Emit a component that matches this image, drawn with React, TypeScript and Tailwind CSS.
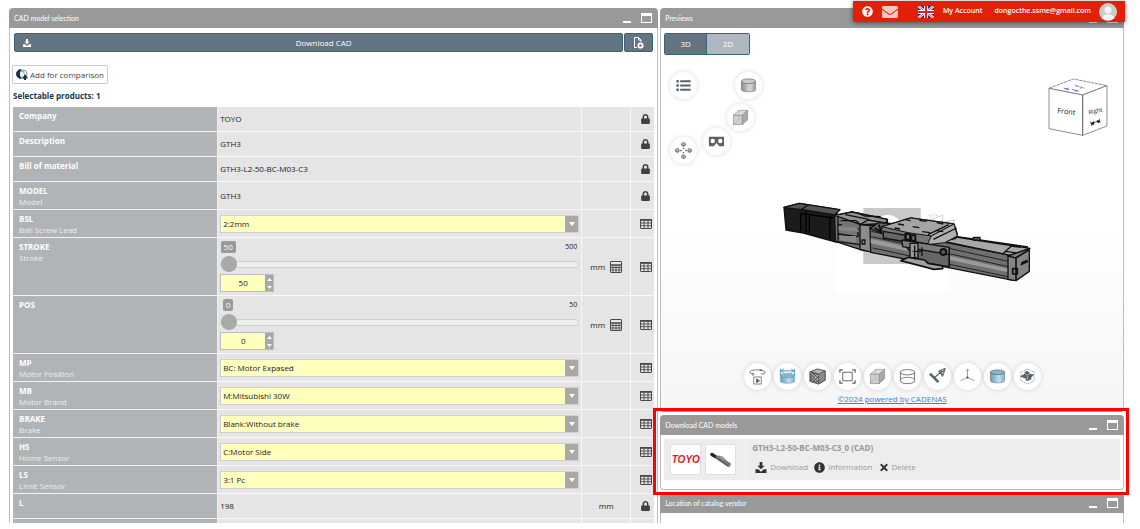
import React, { useState } from "react";
import { FaEnvelope, FaInfoCircle, FaLock, FaQuestionCircle, FaTimes } from "react-icons/fa";

type Row = {
  name: string;
  sub?: string;
  kind: "text" | "select" | "slider";
  value: string;
  max?: number;
  unit?: string;
};

const rows: Row[] = [
  { name: "Company", kind: "text", value: "TOYO" },
  { name: "Description", kind: "text", value: "GTH3" },
  { name: "Bill of material", kind: "text", value: "GTH3-L2-50-BC-M03-C3" },
  { name: "MODEL", sub: "Model", kind: "text", value: "GTH3" },
  { name: "BSL", sub: "Ball Screw Lead", kind: "select", value: "2:2mm" },
  { name: "STROKE", sub: "Stroke", kind: "slider", value: "50", max: 500, unit: "mm" },
  { name: "POS", kind: "slider", value: "0", max: 50, unit: "mm" },
  { name: "MP", sub: "Motor Position", kind: "select", value: "BC: Motor Expased" },
  { name: "MB", sub: "Motor Brand", kind: "select", value: "M:Mitsubishi 30W" },
  { name: "BRAKE", sub: "Brake", kind: "select", value: "Blank:Without brake" },
  { name: "HS", sub: "Home Sensor", kind: "select", value: "C:Motor Side" },
  { name: "LS", sub: "Limit Sensor", kind: "select", value: "3:1 Pc" },
  { name: "L", kind: "text", value: "198", unit: "mm" },
  { name: "", kind: "text", value: "" },
];

function DownloadIcon({ className }: { className?: string }) {
  return (
    <svg viewBox="0 0 12 12" className={className} fill="currentColor" aria-hidden="true">
      <path d="M4.5 0h3v4H10L6 8 2 4h2.500zM0 8h3l3 2.500L9 8h3v4H0z" />
    </svg>
  );
}

function TableIcon() {
  return (
    <svg viewBox="0 0 12 10" className="h-[10px] w-3" fill="none" stroke="#484848" aria-hidden="true">
      <rect x="0.5" y="0.5" width="11" height="9" rx="0.5" />
      <path d="M0 1h12" strokeWidth="1.600" />
      <path d="M0 4h12M0 6.700h12M4 1v8M8 1v8" strokeWidth="0.900" />
    </svg>
  );
}

function CalculatorIcon() {
  return (
    <svg viewBox="0 0 12 12" className="h-3 w-3" fill="none" stroke="#484848" aria-hidden="true">
      <rect x="0.500" y="0.500" width="11" height="11" rx="0.500" />
      <path d="M0 4h12" strokeWidth="1.500" />
      <path d="M0 6.500h12M0 9h12M3 4v8M6 4v8M9 4v8" strokeWidth="0.900" />
    </svg>
  );
}

function PanelHeader({ title }: { title: string }) {
  return (
    <header className="flex h-5 shrink-0 items-center rounded-t bg-[#999999] pl-[5px] pr-[6px] text-white">
      <h2 className="flex-1 font-['Lato','Open_Sans',sans-serif] text-[7px] leading-[10px]">{title}</h2>
      <button type="button" aria-label={`Minimize ${title}`} className="mr-[10px] flex h-[10px] w-2 items-end">
        <span className="h-[2px] w-2 bg-white" />
      </button>
      <button type="button" aria-label={`Maximize ${title}`} className="h-[10px] w-[11px] border border-t-[3px] border-white" />
    </header>
  );
}

function SelectField({ row }: { row: Row }) {
  const [value, setValue] = useState(row.value);
  return (
    <div className="flex h-[18px] border border-[#d0d0d0]">
      <select
        aria-label={row.name}
        value={value}
        onChange={(e) => setValue(e.target.value)}
        className="min-w-0 flex-1 appearance-none bg-[#ffffbe] pl-[2px] text-[8px] leading-4 text-[#222] outline-none"
      >
        <option value={row.value}>{row.value}</option>
      </select>
      <span className="flex w-[13px] items-center justify-center bg-[#a8a8a8]">
        <svg viewBox="0 0 6 4" className="h-1 w-[6px]" fill="#fff" aria-hidden="true">
          <path d="M0 0h6L3 4z" />
        </svg>
      </span>
    </div>
  );
}

function SliderField({ row }: { row: Row }) {
  const [value, setValue] = useState(Number(row.value));
  const max = row.max ?? 100;
  const min = Number(row.value);
  const change = (next: number) => setValue(Math.min(max, Math.max(min, next)));

  return (
    <div className="flex flex-col items-start">
      <div className="flex h-3 w-full items-center justify-between pr-[2px]">
        <span className="flex w-4 justify-center">
          <span className="rounded-xs bg-[#999] px-[3px] text-[8px] leading-3 text-white">{value}</span>
        </span>
        <span className="text-[7px] leading-3">{max}</span>
      </div>
      <input
        type="range"
        aria-label={`${row.name} slider`}
        min={min}
        max={max}
        value={value}
        onChange={(e) => change(Number(e.target.value))}
        className="mt-[3px] block h-4 w-full appearance-none bg-transparent [&::-webkit-slider-runnable-track]:h-[7px] [&::-webkit-slider-runnable-track]:rounded-full [&::-webkit-slider-runnable-track]:border [&::-webkit-slider-runnable-track]:border-[#d0d0d0] [&::-webkit-slider-runnable-track]:bg-[#eeeeee] [&::-webkit-slider-thumb]:-mt-[6px] [&::-webkit-slider-thumb]:h-4 [&::-webkit-slider-thumb]:w-4 [&::-webkit-slider-thumb]:appearance-none [&::-webkit-slider-thumb]:rounded-full [&::-webkit-slider-thumb]:bg-[#a9a9a9]"
      />
      <div className="mt-[2px] flex h-[18px] w-[54px] border border-[#bdbdbd]">
        <input
          type="text"
          aria-label={row.name}
          value={value}
          onChange={(e) => change(Number(e.target.value) || min)}
          className="w-[44px] min-w-0 bg-[#ffffbe] text-center text-[8px] leading-4 outline-none"
        />
        <div className="flex flex-1 flex-col bg-[#a8a8a8]">
          <button type="button" aria-label={`Increase ${row.name}`} onClick={() => change(value + 1)} className="flex flex-1 items-center justify-center">
            <svg viewBox="0 0 5 3" className="h-[3px] w-[5px]" fill="#fff" aria-hidden="true"><path d="M0 3h5L2.500 0z" /></svg>
          </button>
          <button type="button" aria-label={`Decrease ${row.name}`} onClick={() => change(value - 1)} className="flex flex-1 items-center justify-center">
            <svg viewBox="0 0 5 3" className="h-[3px] w-[5px]" fill="#fff" aria-hidden="true"><path d="M0 0h5L2.500 3z" /></svg>
          </button>
        </div>
      </div>
    </div>
  );
}

const rowHeight = (row: Row) => {
  if (row.kind === "slider") return "h-[58px]";
  return row.sub ? "h-7" : "h-[25px]";
};

function SelectionPanel() {
  return (
    <section className="flex min-w-0 flex-col">
      <PanelHeader title="CAD model selection" />
      <div className="flex-1 overflow-hidden border-x border-[#bdbdbd] px-[3px] pt-[5px]">
        <div className="flex gap-px px-px text-[8px] text-white">
          <button type="button" className="grid h-[19px] flex-1 grid-cols-[10px_1fr] items-center rounded-xs border border-[#3a6378] bg-[#627580] px-2">
            <DownloadIcon className="h-2 w-2" />
            <span>Download CAD</span>
          </button>
          <button type="button" aria-label="Export options" className="flex h-[19px] w-[29px] items-center justify-center rounded-xs border border-[#3a6378] bg-[#627580]">
            <svg viewBox="0 0 11 12" className="h-3 w-[11px]" fill="none" stroke="#fff" aria-hidden="true">
              <path d="M4 10.500H1.500v-10h4L8 3v2M5.500.500V3H8" />
              <circle cx="7.500" cy="8.500" r="2.200" strokeWidth="1.800" />
            </svg>
          </button>
        </div>
        <button type="button" className="-ml-px mt-[13px] flex h-[19px] items-center gap-[2px] rounded-xs border border-[#c4ccd0] px-[3px] text-[8px] text-[#444]">
          <svg viewBox="0 0 12 11" className="h-[11px] w-3" aria-hidden="true">
            <circle cx="7" cy="5" r="4" fill="#fff" stroke="#8295a5" />
            <path d="M5 .5a4.500 4.500 0 1 0 0 9C3 7 3 3 5 .5z" fill="#16344c" stroke="#16344c" />
            <path d="m5 3 2-1 2 4" stroke="#8295a5" fill="none" />
            <path d="M9 6v5M6.500 8.500h5" stroke="#16344c" strokeWidth="2" />
          </svg>
          Add for comparison
        </button>
        <p className="text-[8px] font-bold leading-[23px] text-[#203848]">Selectable products: 1</p>

        <table className="w-full table-fixed border-separate border-spacing-0 text-[8px] text-[#222]">
          <colgroup>
            <col className="w-[32%]" />
            <col />
            <col className="w-[49px]" />
            <col className="w-[23px]" />
          </colgroup>
          <tbody>
            {rows.map((row) => (
              <tr key={row.name} className={rowHeight(row)}>
                <th scope="row" className="border-b border-r border-[#f1f1f1] bg-[#b0b4b7] p-0 pl-[6px] pt-[3px] text-left align-top leading-[11px] text-white">
                  {row.name}
                  {row.sub && <span className="block font-normal text-[#eceeef]">{row.sub}</span>}
                </th>
                <td className="border-b border-r border-[#f8f8f8] bg-[#e5e5e5] px-[2px] py-0">
                  {row.kind === "text" && row.value}
                  {row.kind === "select" && <SelectField row={row} />}
                  {row.kind === "slider" && <SliderField row={row} />}
                </td>
                <td className="border-b border-r border-[#f8f8f8] bg-[#e5e5e5] p-0">
                  <div className="flex items-center justify-center gap-[5px]">
                    {row.unit}
                    {row.kind === "slider" && <CalculatorIcon />}
                  </div>
                </td>
                <td className="border-b border-[#f8f8f8] bg-[#e5e5e5] p-0 pl-[6px]">
                  <div className="flex justify-center">
                    {row.kind === "text" ? row.name && <FaLock className="h-[10px] w-[9px] text-[#404040]" /> : <TableIcon />}
                  </div>
                </td>
              </tr>
            ))}
          </tbody>
        </table>
      </div>
    </section>
  );
}

function RoundButton({ label, className = "", children }: { label: string; className?: string; children: React.ReactNode }) {
  return (
    <button type="button" aria-label={label} className={`flex h-[27px] w-[27px] items-center justify-center rounded-full bg-white shadow-[0_0_5px_rgba(0,0,0,0.15)] ${className}`}>
      <svg viewBox="0 0 18 18" className="h-[17px] w-[17px]" fill="none" stroke="#596169" aria-hidden="true">
        {children}
      </svg>
    </button>
  );
}

function Cylinder({ fill }: { fill: string }) {
  return (
    <>
      <defs>
        <linearGradient id={`cyl-${fill}`}>
          <stop offset="0" stopColor={fill === "blue" ? "#5f9cbb" : "#8c8c8c"} />
          <stop offset="0.600" stopColor={fill === "blue" ? "#c6e0ec" : "#d8d8d8"} />
          <stop offset="1" stopColor={fill === "blue" ? "#7eb0c8" : "#9a9a9a"} />
        </linearGradient>
      </defs>
      <path d="M1.500 4.500v9c0 3 15 3 15 0v-9" fill={`url(#cyl-${fill})`} strokeWidth="0.500" />
      <ellipse cx="9" cy="4.500" rx="7.500" ry="2.500" fill={fill === "blue" ? "#82b6ce" : "#cccccc"} strokeWidth="0.700" />
    </>
  );
}

function Cube() {
  return (
    <>
      <path d="M1.500 6.500H11v10H1.500z" fill="#cfcfcf" stroke="#888" strokeWidth="0.700" />
      <path d="M1.500 6.500 7 1.500h9.500l-5.500 5z" fill="#dedede" stroke="#888" strokeWidth="0.700" />
      <path d="m11 6.500 5.500-5v10l-5.500 5z" fill="#a9a9a9" stroke="#888" strokeWidth="0.700" />
      <path d="M7 1.500v10h9.500M7 11.500l-5.500 5" stroke="#aaa" strokeWidth="0.500" />
    </>
  );
}

function OrbitMenu() {
  return (
    <div className="absolute left-[9px] top-[44px]">
      <RoundButton label="Structure" className="absolute left-0 top-0">
        <path d="M5.500 4.500h11M5.500 9h11M5.500 13.500h11" strokeWidth="2" />
        <path d="M1.500 4.500h2.500M1.500 9h2.500M1.500 13.500h2.500" strokeWidth="2.600" />
      </RoundButton>
      <RoundButton label="Shading" className="absolute left-[65px] top-0">
        <Cylinder fill="grey" />
      </RoundButton>
      <RoundButton label="Projection" className="absolute left-[57px] top-[32px]">
        <Cube />
      </RoundButton>
      <RoundButton label="VR view" className="absolute left-[33px] top-[56px]">
        <path d="M1 4h16v10h-5L9 10.500 6 14H1z" fill="#596169" stroke="none" />
        <circle cx="5" cy="8.500" r="2.300" fill="#fff" stroke="none" />
        <circle cx="13" cy="8.500" r="2.300" fill="#fff" stroke="none" />
      </RoundButton>
      <RoundButton label="Explode" className="absolute left-0 top-[65px]">
        <path d="m9 .5 1.800 1v2L9 4.500l-1.800-1v-2zM9 13.500l1.800 1v2l-1.800 1-1.800-1v-2zM2.500 7l1.800 1v2l-1.800 1-1.800-1V8zM15.500 7l1.800 1v2l-1.800 1-1.800-1V8z" fill="#c9cccf" />
        <path d="M9 2.500v2M9 15.500v2M2.500 9v2M15.500 9v2" strokeWidth="0.700" />
        <path d="M9 6v1.500M9 10.500V12M5.500 9H7M11 9h1.500" strokeWidth="1.400" />
      </RoundButton>
    </div>
  );
}

function ViewerToolbar() {
  return (
    <div className="flex gap-[3px]">
      <RoundButton label="Animate">
        <path d="M5 6.500C-2 6 0 2 9 2s11 4 4 4.500M3.500 5l2 1.500-2 1.500M12 1l1.500 1.500L11 3" strokeWidth="0.900" />
        <path d="M5 9.500h8v7.500H5z" strokeWidth="0.800" />
        <path d="m8 11.500 3 2-3 2z" fill="#596169" />
      </RoundButton>
      <RoundButton label="Measure">
        <path d="M1.500 8v6c0 3 15 3 15 0V8" fill="url(#cyl-blue)" stroke="#6a9db7" strokeWidth="0.600" />
        <ellipse cx="9" cy="8" rx="7.500" ry="2.500" fill="#82b6ce" stroke="#6a9db7" strokeWidth="0.600" />
        <path d="M1.500 1v7M16.500 1v7M2 3h14M5 1 2.500 3 5 5M13 1l2.500 2L13 5" stroke="#3f88aa" strokeWidth="0.900" />
      </RoundButton>
      <RoundButton label="Texture">
        <path d="m1 4 8-3 8 2v10l-7 4-9-3z" fill="#b5b5b5" stroke="#444" strokeWidth="0.900" />
        <path d="m10 6.500 7-3.500v10l-7 4z" fill="#8a8a8a" stroke="#444" strokeWidth="0.700" />
        <path d="m1 4 9 2.500" stroke="#444" />
        <path d="m1 6 9 9M1 9l7 7M1 12l3 3M4 5l6 6M1 8l3-3M1 11l6-6M1 14l8-8M4 15l6-6M7 16l3-3" stroke="#333" strokeWidth="0.800" />
      </RoundButton>
      <RoundButton label="Fit to view">
        <path d="M4 4.500h10v9H4z" />
        <path d="M1 5V2h3M14 2h3v3M17 13v3h-3M4 16H1v-3" strokeWidth="1.300" />
      </RoundButton>
      <RoundButton label="Transparency">
        <Cube />
      </RoundButton>
      <RoundButton label="Wireframe">
        <path d="M1.500 4.500v9c0 4 15 4 15 0v-9" strokeWidth="0.900" />
        <ellipse cx="9" cy="4.500" rx="7.500" ry="2.800" strokeWidth="0.900" />
        <path d="M1.500 12.500c0-3.500 15-3.500 15 0" strokeWidth="0.800" />
      </RoundButton>
      <RoundButton label="Section">
        <path d="m1 6 9 9" strokeWidth="2.600" />
        <path d="m6 10 8-7M10.500 6 16 3M12 5l2.500 4" strokeWidth="1.300" />
        <path d="m10.500 3.500 6.500-3-2 7z" strokeWidth="1.200" />
      </RoundButton>
      <RoundButton label="Axes">
        <path d="M9 1.500v8.500L1.500 13.500M9 10l7.500 3.500M8 3l1-2 1 2" stroke="#7d848a" strokeWidth="0.800" />
        <circle cx="9" cy="10" r="0.800" fill="#596169" />
      </RoundButton>
      <RoundButton label="Shaded view">
        <Cylinder fill="blue" />
      </RoundButton>
      <RoundButton label="Isolate part">
        <path d="m9 1 7 3.500v9L9 17l-7-3.500v-9z" stroke="#8b9197" strokeWidth="0.900" strokeDasharray="1.500 1" />
        <path d="m8 3 3 1.500V6l5 1-3 3v2l-4 2-2-1v-2L1 9l5-3V4.500z" fill="#596169" stroke="none" />
        <path d="m6 6 3 1.500L12 6M9 8v5" stroke="#ccc" strokeWidth="0.700" />
      </RoundButton>
    </div>
  );
}

function ActuatorDrawing({ className }: { className?: string }) {
  return (
    <svg viewBox="0 0 840 330" className={className} fill="none" stroke="#111" strokeWidth="4" strokeLinejoin="round" role="img" aria-label="GTH3 linear actuator">
      <path d="M196 175h340v132H196z" fill="#fff" stroke="none" />
      <path d="M280 54h172v168H280z" fill="#c9c9c9" stroke="none" />
      <path d="M318 95c8-25 60-28 72 2l-20 8z" fill="#fff" stroke="none" />
      <path d="M454 98l64-22v40M512 98l42-8-14 36M454 98v14M478 74l4 8M488 72l4 8M497 70l4 8" stroke="#b4b4b4" strokeWidth="2" />
      {/* motor */}
      <path d="M42 52 88 40l112 18 8 96-10 2-98-27-52-9z" fill="#1b1b1b" />
      <path d="m42 52 46-12 122 19-16 16-96-16-50-5z" fill="#555" />
      <path d="m92 70 100 14M92 70v52M108 60v70M118 78v50M180 84v62" stroke="#000" />
      <path d="m96 58 18-14" />
      {/* coupling housing */}
      <path d="m194 76 52-10 106 22v96l-72-2-84-28z" fill="#747474" />
      <path d="m194 76 52-10 106 22-4 12-76 4z" fill="#929292" />
      <path d="M204 82v70M212 92h46l14 12M216 104h-10M212 116h52v24l-58-8M226 74l70 14M260 68l24 10 48 2M198 154l72 10" />
      <path d="M206 112h54l8 14-62-6zM208 138h50v20l-46-8z" fill="#888" stroke="none" />
      <path d="M270 104h42v84l-42-10z" fill="#8c8c8c" />
      <path d="m270 104 24-14 60 10-42 8zM276 150h9v12h-9z" />
      {/* rail body */}
      <path d="m300 112 110 22 310 62 10 75-428-84z" fill="#707070" />
      <path d="m304 124 420 92M304 140l420 92M304 152l420 90M308 174l414 88" stroke="#222" strokeWidth="3" />
      <path d="m302 146 420 92v10l-420-88z" fill="#9a9a9a" stroke="none" />
      <path d="m300 116 24-18 60 4 22 34-80-10z" fill="#666" />
      <path d="m314 114 20 12M326 104l10 26" strokeWidth="6" />
      {/* far rail and end cap */}
      <path d="m522 154 36-13 222 34-58 21z" fill="#a8a8a8" />
      <path d="m526 148 36-8 212 31M700 190l24-22 28 4M706 184l44 6" />
      <path d="m714 198 64-22v68l-40 28-24-4z" fill="#858585" />
      <path d="m738 203 40-24M738 203v67M714 198l24 6M752 224l22-10M754 219l18-8M728 236h14v16h-14z" strokeWidth="5" />
      {/* carriage */}
      <path d="m336 110 86-26 130 18 10 30-6 14-82 18-140-34z" fill="#777" />
      <path d="m336 110 86-26 130 18-68 36-70-10z" fill="#a4a4a4" strokeWidth="3" />
      <path d="m484 138 68-36 10 36-38 20-52 6z" fill="#b0b0b0" strokeWidth="3" />
      <path d="m474 134 62-30M490 148l70-34M404 88l18 4M448 91l22 3M500 98l20 4M384 102l18 3M428 110l20 3M500 122l20 3M374 114l16 3M456 125l24 3" strokeWidth="4" />
      <path d="m340 124 68 12v20l-68-12zM398 156l140 20v54l-94-14z" fill="#666" />
      <path d="m396 150 142 22v22l-140-24z" fill="#7d7d7d" />
      <path d="M406 132h14v17h-14zM424 136h12v16h-12z" strokeWidth="6" />
      <path d="M420 160h24v44h-24z" fill="#999" />
      <path d="m392 212 24-10 48 8 10 10 44 8v8l-26 2z" fill="#a1a1a1" strokeWidth="5" />
      <path d="M434 166v42M456 172v26M428 184h30M538 174v56" />
      <circle cx="520" cy="186" r="9" fill="#555" strokeWidth="6" />
      <path d="M610 150v-8h20v10z" fill="#555" />
    </svg>
  );
}

function ViewCube() {
  return (
    <svg viewBox="590 232 186 180" className="absolute right-[14px] top-[49px] h-[60px] w-[62px]" fill="#fff" stroke="#555" strokeWidth="2" role="img" aria-label="View cube">
      <path d="m596 266 73-28 101 20-73 28z" strokeDasharray="10 2" />
      <path d="m596 266 101 20v121l-101-20zM697 286l73-28v121l-73 28z" />
      <path d="M672 256l30 10M676 263l6-6M690 268l5-7" stroke="#777" />
      <path d="M640 265l16 5M666 269l18 6M646 270l8-5M676 276l6-6" stroke="#6868ee" strokeWidth="3" />
      <path d="m722 372 26-9M721 365l3 14M747 357l2 14M722 372l8-6v9zM748 364l-8-1 3 7z" stroke="#111" fill="#111" />
      <text x="648" y="343" textAnchor="middle" fontSize="22" fill="#222" stroke="none" transform="rotate(6 648 335)">Front</text>
      <text x="735" y="340" textAnchor="middle" fontSize="18" fill="#222" stroke="none" transform="rotate(-12 735 332)">Right</text>
    </svg>
  );
}

function PreviewPanel() {
  const [mode, setMode] = useState("3D");
  return (
    <section className="flex min-h-0 flex-1 flex-col">
      <PanelHeader title="Previews" />
      <div className="relative flex flex-1 flex-col items-center justify-between rounded-b border border-t-0 border-[#bdbdbd] border-b-[#999] bg-linear-to-b from-white from-50% to-[#f5f5f5] px-[3px] pb-[6px] pt-[5px]">
        <div className="flex self-start overflow-hidden rounded-xs border border-[#3a6378] text-[8px] text-white">
          {["3D", "2D"].map((m) => (
            <button
              key={m}
              type="button"
              onClick={() => setMode(m)}
              className={`h-5 w-[42px] first:border-r first:border-[#3a6378] ${mode === m ? "bg-[#627580]" : "bg-[#afb8c1]"}`}
            >
              {m}
            </button>
          ))}
        </div>
        <ActuatorDrawing className="absolute left-[109px] top-[162px] h-[110px] w-[280px]" />
        <OrbitMenu />
        <ViewCube />
        <div className="flex flex-col items-center gap-[3px]">
          <ViewerToolbar />
          <a href="#cadenas" className="text-[8px] leading-3 text-[#3d80d6] underline">©2024 powered by CADENAS</a>
        </div>
      </div>
    </section>
  );
}

function DownloadsPanel() {
  return (
    <section className="relative">
      <PanelHeader title="Download CAD models" />
      <div className="rounded-b border border-t-0 border-[#bdbdbd] px-[3px] pb-[9px] pt-1">
        <div className="flex h-[41px] items-center bg-[#ededed] pl-[6px] text-[#999]">
          <div className="flex h-[31px] w-[31px] items-center justify-center border border-[#e0e0e0] bg-white font-['Liberation_Sans',sans-serif] text-[10px] font-bold italic text-[#e8141c]">
            TOYO
          </div>
          <div className="ml-1 flex h-[31px] w-[31px] items-center justify-center border border-[#e0e0e0] bg-white">
            <svg viewBox="0 0 24 18" className="h-[18px] w-6" aria-hidden="true">
              <path d="m1 3 2-1.500 6 4-1.500 2.500L2 5z" fill="#222" />
              <path d="m7 5 3-.5 12 8-1 3-2 .5L7 8z" fill="#777" />
              <path d="m8 7 11 8" stroke="#444" strokeWidth="0.800" />
              <path d="m10 5.500 3-.5 4 3.500-3 1z" fill="#999" />
            </svg>
          </div>
          <div className="ml-[9px] flex h-full flex-col border-l border-[#f6f6f6] pl-[6px] pt-[3px]">
            <h3 className="text-[8px] font-bold leading-3">GTH3-L2-50-BC-M03-C3_0 (CAD)</h3>
            <div className="mt-[7px] flex gap-[6px] pl-[3px] text-[8px] leading-3">
              <button type="button" className="flex items-center gap-[3px]"><DownloadIcon className="h-[11px] w-3 text-[#333]" />Download</button>
              <button type="button" className="flex items-center gap-[3px]"><FaInfoCircle className="h-[11px] w-[11px] text-[#333]" />Information</button>
              <button type="button" className="flex items-center gap-[3px]"><FaTimes className="h-[11px] w-[10px] text-[#333]" />Delete</button>
            </div>
          </div>
        </div>
      </div>
      <div className="pointer-events-none absolute -bottom-[5px] -left-[7px] -right-[5px] -top-[7px] border-[3px] border-[#fe0000]" />
    </section>
  );
}

function AccountBar() {
  return (
    <nav className="absolute right-[15px] top-px flex h-[21px] items-center rounded-bl-xs bg-[#e22008] pl-[9px] pr-2 text-[7px] font-semibold text-white shadow-[0_1px_5px_rgba(0,0,0,0.5)]">
      <a href="#help" aria-label="Help"><FaQuestionCircle className="h-[11px] w-[11px]" /></a>
      <a href="#mail" aria-label="Messages" className="ml-[9px]"><FaEnvelope className="h-4 w-4 text-[#fac4c0]" /></a>
      <button type="button" aria-label="Language" className="ml-5">
        <svg viewBox="0 0 16 12" className="h-3 w-4" aria-hidden="true">
          <path d="M0 0h16v12H0z" fill="#253878" />
          <path d="m0 0 16 12M16 0 0 12" stroke="#fff" strokeWidth="2.400" />
          <path d="m0 0 16 12M16 0 0 12" stroke="#d42236" strokeWidth="0.800" />
          <path d="M8 0v12M0 6h16" stroke="#fff" strokeWidth="4" />
          <path d="M8 0v12M0 6h16" stroke="#d42236" strokeWidth="2.200" />
        </svg>
      </button>
      <a href="#account" className="ml-[9px]">My Account</a>
      <a href="#profile" className="ml-3 flex items-center gap-2">
        dongocthe.ssme@gmail.com
        <svg viewBox="0 0 18 18" className="h-[18px] w-[18px]" aria-hidden="true">
          <circle cx="9" cy="9" r="9" fill="#cbcbcb" />
          <circle cx="9" cy="7" r="3.500" fill="#f4f4f4" />
          <path d="M3 15c1-5 11-5 12 0-3 3-9 3-12 0z" fill="#f4f4f4" />
        </svg>
      </a>
    </nav>
  );
}

export default function App() {
  return (
    <div className="relative flex h-screen flex-col overflow-hidden bg-white pb-[6px] pl-[9px] pr-4 pt-2 font-['Open_Sans','Noto_Sans',sans-serif]">
      <main className="grid min-h-0 flex-1 grid-cols-[7fr_5fr] grid-rows-[minmax(0,1fr)] gap-[2px]">
        <SelectionPanel />
        <div className="flex min-h-0 min-w-0 flex-col gap-[3px]">
          <PreviewPanel />
          <DownloadsPanel />
          <section>
            <PanelHeader title="Location of catalog vendor" />
            <div className="h-[10px] border-x border-[#bdbdbd]" />
          </section>
        </div>
      </main>
      <AccountBar />
    </div>
  );
}
